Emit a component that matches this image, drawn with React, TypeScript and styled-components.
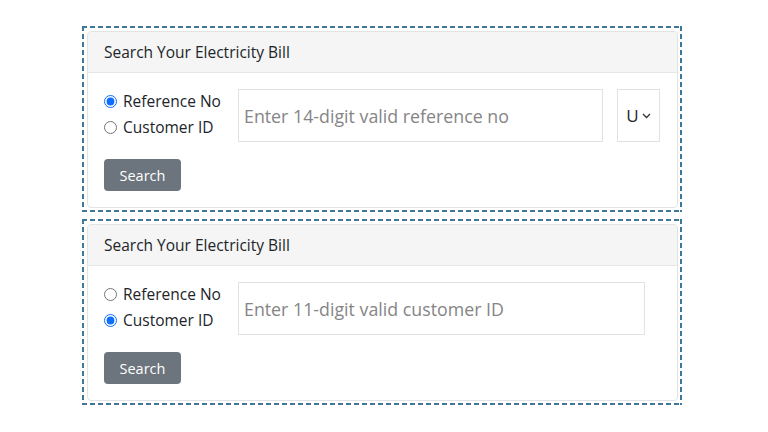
import styled, { createGlobalStyle } from "styled-components";

const GlobalStyle = createGlobalStyle`
  html, body {
    margin: 0;
    padding: 0;
    background: #ffffff;
  }
  body {
    font-family: "Open Sans", "Noto Sans", sans-serif;
    color: #212529;
  }
`

const dashColor = "#40769a";

const Page = styled.div`
  width: 768px;
  height: 432px;
  padding: 26px 0 0 82px;
  box-sizing: border-box;
  display: flex;
  flex-direction: column;
  gap: 7px;
`

const Frame = styled.div`
  width: 600px;
  box-sizing: border-box;
  padding: 5px 4px 4px 5px;
  background:
    repeating-linear-gradient(90deg, ${dashColor} 0 5px, transparent 5px 8px) top left / 100% 2px no-repeat,
    repeating-linear-gradient(90deg, ${dashColor} 0 5px, transparent 5px 8px) bottom left / 100% 2px no-repeat,
    repeating-linear-gradient(180deg, ${dashColor} 0 5px, transparent 5px 8px) top left / 2px 100% no-repeat,
    repeating-linear-gradient(180deg, ${dashColor} 0 5px, transparent 5px 8px) top right / 2px 100% no-repeat;
`

const Card = styled.div`
  border: 1px solid #e3e3e3;
  border-radius: 4px;
  background: #fff;
  overflow: hidden;
`

const Header = styled.div`
  height: 41px;
  box-sizing: border-box;
  padding: 0 16px;
  display: flex;
  align-items: center;
  background: #f5f5f5;
  border-bottom: 1px solid #e6e6e6;
  font-size: 15.5px;
  color: #212529;
`

const Body = styled.div`
  padding: 16px;
  display: flex;
  flex-direction: column;
  gap: 17px;
`

const Row = styled.div`
  display: flex;
  align-items: center;
  gap: 14px;
`

const RadioGroup = styled.div`
  width: 120px;
  display: flex;
  flex-direction: column;
  gap: 5px;
  margin-top: -2px;
`

const RadioLabel = styled.label`
  display: flex;
  align-items: center;
  gap: 6px;
  font-size: 15.5px;
  line-height: 21px;
  white-space: nowrap;
  color: #212529;

  input {
    margin: 0;
    width: 13px;
    height: 13px;
    accent-color: #0d6efd;
  }
`

const TextInput = styled.input<{ $width: number }>`
  width: ${props => props.$width}px;
  height: 53px;
  box-sizing: border-box;
  border: 1px solid #e2e2e2;
  border-radius: 0;
  padding: 0 5px;
  font-family: inherit;
  font-size: 17.8px;
  color: #212529;
  outline: none;

  &::placeholder {
    color: #858585;
  }
`

const SelectBox = styled.div`
  width: 43px;
  height: 53px;
  box-sizing: border-box;
  border: 1px solid #e2e2e2;
  display: flex;
  align-items: center;
  justify-content: center;
  gap: 3px;
  font-size: 17px;
  color: #212529;
`

const SearchButton = styled.button`
  align-self: flex-start;
  width: 77px;
  height: 32px;
  border: none;
  border-radius: 4px;
  background: #6c757d;
  color: #fff;
  font-family: inherit;
  font-size: 14.5px;
  cursor: pointer;
`

interface BillFormProps {
  mode: "reference" | "customer";
}

function BillForm({ mode }: BillFormProps) {
  const isRef = mode === "reference";
  return (
    <Frame>
      <Card>
        <Header>Search Your Electricity Bill</Header>
        <Body>
          <Row>
            <RadioGroup>
              <RadioLabel>
                <input type="radio" name={`type-${mode}`} defaultChecked={isRef} />
                Reference No
              </RadioLabel>
              <RadioLabel>
                <input type="radio" name={`type-${mode}`} defaultChecked={!isRef} />
                Customer ID
              </RadioLabel>
            </RadioGroup>
            {isRef ? (
              <>
                <TextInput $width={365} placeholder="Enter 14-digit valid reference no" />
                <SelectBox>
                  U
                  <svg width="9" height="6" viewBox="0 0 9 6" fill="none">
                    <path d="M1 1l3.5 3.5L8 1" stroke="#333" strokeWidth="1.3" />
                  </svg>
                </SelectBox>
              </>
            ) : (
              <TextInput $width={407} placeholder="Enter 11-digit valid customer ID" />
            )}
          </Row>
          <SearchButton>Search</SearchButton>
        </Body>
      </Card>
    </Frame>
  )
}

export default function App() {
  return (
    <>
      <GlobalStyle />
      <Page>
        <BillForm mode="reference" />
        <BillForm mode="customer" />
      </Page>
    </>
  )
}
